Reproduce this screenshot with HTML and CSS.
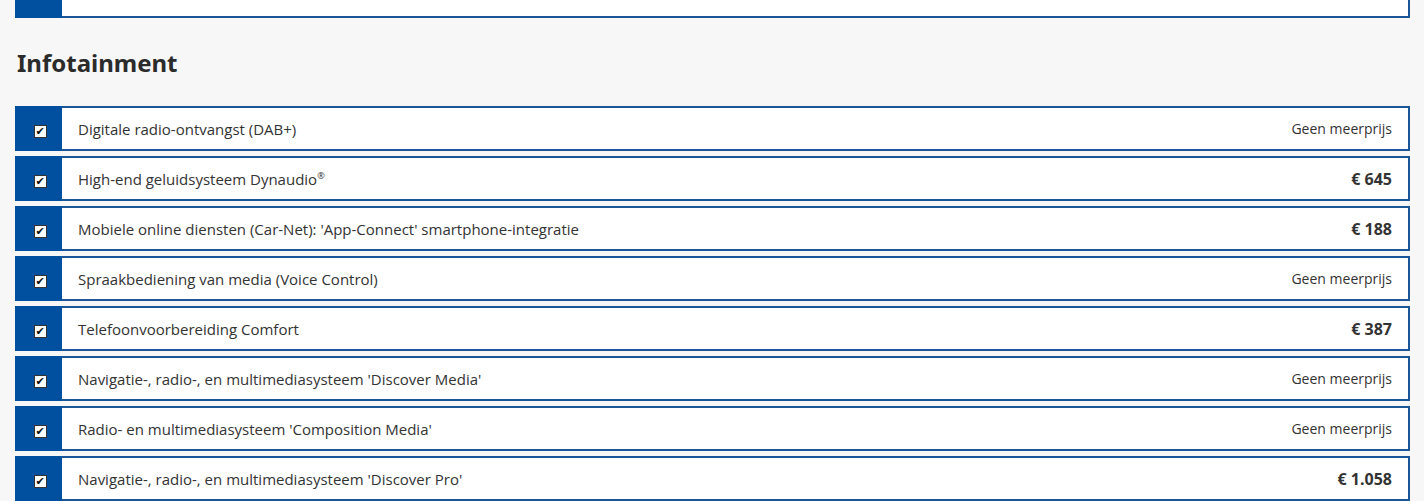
FILE: index.html
```html
<!DOCTYPE html>
<html lang="nl">
<head>
    <meta charset="UTF-8">
    <link rel="stylesheet" href="styles.css">
    <title>Infotainment</title>
</head>
<body>
    <div class="container">
        <div class="option option-cut">
            <div class="check-cell"></div>
            <div class="option-body"></div>
        </div>

        <h2>Infotainment</h2>

        <div class="option">
            <div class="check-cell"><span class="box">&#10004;</span></div>
            <div class="option-body"><span class="name">Digitale radio-ontvangst (DAB+)</span><span class="price">Geen meerprijs</span></div>
        </div>
        <div class="option">
            <div class="check-cell"><span class="box">&#10004;</span></div>
            <div class="option-body"><span class="name">High-end geluidsysteem Dynaudio<sup>®</sup></span><span class="price bold">€ 645</span></div>
        </div>
        <div class="option">
            <div class="check-cell"><span class="box">&#10004;</span></div>
            <div class="option-body"><span class="name">Mobiele online diensten (Car-Net): 'App-Connect' smartphone-integratie</span><span class="price bold">€ 188</span></div>
        </div>
        <div class="option">
            <div class="check-cell"><span class="box">&#10004;</span></div>
            <div class="option-body"><span class="name">Spraakbediening van media (Voice Control)</span><span class="price">Geen meerprijs</span></div>
        </div>
        <div class="option">
            <div class="check-cell"><span class="box">&#10004;</span></div>
            <div class="option-body"><span class="name">Telefoonvoorbereiding Comfort</span><span class="price bold">€ 387</span></div>
        </div>
        <div class="option">
            <div class="check-cell"><span class="box">&#10004;</span></div>
            <div class="option-body"><span class="name">Navigatie-, radio-, en multimediasysteem 'Discover Media'</span><span class="price">Geen meerprijs</span></div>
        </div>
        <div class="option">
            <div class="check-cell"><span class="box">&#10004;</span></div>
            <div class="option-body"><span class="name">Radio- en multimediasysteem 'Composition Media'</span><span class="price">Geen meerprijs</span></div>
        </div>
        <div class="option">
            <div class="check-cell"><span class="box">&#10004;</span></div>
            <div class="option-body"><span class="name">Navigatie-, radio-, en multimediasysteem 'Discover Pro'</span><span class="price bold">€ 1.058</span></div>
        </div>
    </div>
</body>
</html>
```

FILE: styles.css
```css
body {
    margin: 0;
    padding: 0;
    background-color: #f7f7f7;
    font-family: 'Open Sans', 'Noto Sans', sans-serif;
    color: #333;
}

.container {
    padding: 0 14px 0 15px;
}

h2 {
    font-family: 'Noto Sans', sans-serif;
    font-size: 24px;
    font-weight: 700;
    color: #2b2b2b;
    margin: 0;
    padding: 28px 0 0 2px;
    height: 88px;
    box-sizing: border-box;
    line-height: 34px;
}

.option {
    display: flex;
    height: 45px;
    margin-bottom: 5px;
    background-color: #fff;
}

.option-cut {
    height: 18px;
    margin-bottom: 0;
}

.option-cut .option-body {
    border-top: none;
}

.check-cell {
    width: 47px;
    box-sizing: border-box;
    padding: 5px 0 0 3px;
    flex-shrink: 0;
    background-color: #00509f;
    display: flex;
    align-items: center;
    justify-content: center;
}

.box {
    width: 11px;
    height: 11px;
    background-color: #fff;
    border: 1px solid #333;
    color: #111;
    font-size: 11px;
    font-weight: 700;
    line-height: 12px;
    text-align: center;
    font-family: 'DejaVu Sans', sans-serif;
}

.option-body {
    flex: 1;
    display: flex;
    align-items: center;
    justify-content: space-between;
    border: 2px solid #1b5696;
    border-left: none;
    padding: 0 16px 0 16px;
    font-size: 14px;
}

.name {
    font-size: 15px;
}

.name sup {
    font-size: 9px;
    line-height: 0;
    color: #333;
}

.price.bold {
    font-weight: 700;
    font-size: 16px;
}
```
